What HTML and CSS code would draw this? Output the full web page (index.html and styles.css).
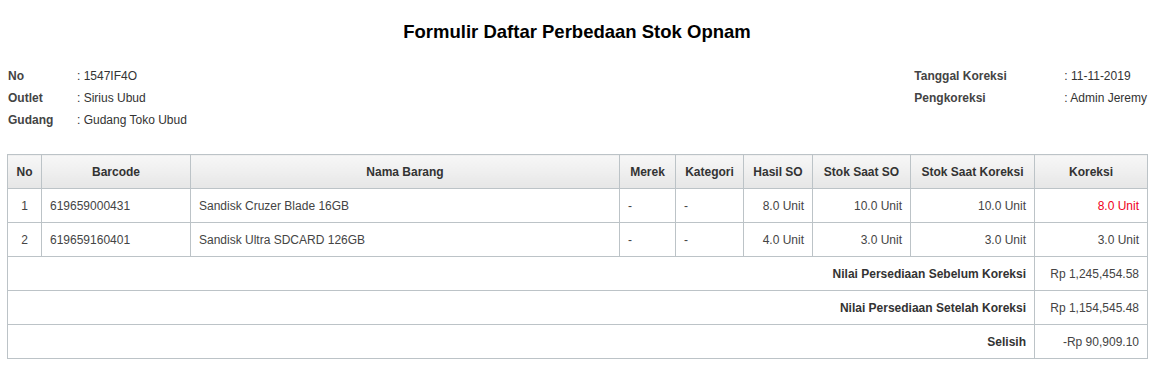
FILE: index.html
```html
<!DOCTYPE html>
<html>
<head>
<meta charset="utf-8">
<link rel="stylesheet" href="styles.css">
</head>
<body>
<div class="page">
  <h1 class="title">Formulir Daftar Perbedaan Stok Opnam</h1>
  <div class="info">
    <div class="info-block">
      <div class="info-row"><span class="lbl lbl-left">No</span><span class="val">: 1547IF4O</span></div>
      <div class="info-row"><span class="lbl lbl-left">Outlet</span><span class="val">: Sirius Ubud</span></div>
      <div class="info-row"><span class="lbl lbl-left">Gudang</span><span class="val">: Gudang Toko Ubud</span></div>
    </div>
    <div class="info-block">
      <div class="info-row"><span class="lbl lbl-right">Tanggal Koreksi</span><span class="val">: 11-11-2019</span></div>
      <div class="info-row"><span class="lbl lbl-right">Pengkoreksi</span><span class="val">: Admin Jeremy</span></div>
    </div>
  </div>
  <table class="grid">
    <colgroup>
      <col class="c-no"><col class="c-bar"><col class="c-name"><col class="c-merek"><col class="c-kat"><col class="c-hasil"><col class="c-stok"><col class="c-stokk"><col class="c-kor">
    </colgroup>
    <thead>
      <tr>
        <th>No</th><th>Barcode</th><th>Nama Barang</th><th>Merek</th><th>Kategori</th><th>Hasil SO</th><th>Stok Saat SO</th><th>Stok Saat Koreksi</th><th>Koreksi</th>
      </tr>
    </thead>
    <tbody>
      <tr>
        <td class="center">1</td><td>619659000431</td><td>Sandisk Cruzer Blade 16GB</td><td>-</td><td>-</td><td class="right">8.0 Unit</td><td class="right">10.0 Unit</td><td class="right">10.0 Unit</td><td class="right red">8.0 Unit</td>
      </tr>
      <tr>
        <td class="center">2</td><td>619659160401</td><td>Sandisk Ultra SDCARD 126GB</td><td>-</td><td>-</td><td class="right">4.0 Unit</td><td class="right">3.0 Unit</td><td class="right">3.0 Unit</td><td class="right">3.0 Unit</td>
      </tr>
      <tr>
        <td colspan="8" class="right bold">Nilai Persediaan Sebelum Koreksi</td><td class="right">Rp 1,245,454.58</td>
      </tr>
      <tr>
        <td colspan="8" class="right bold">Nilai Persediaan Setelah Koreksi</td><td class="right">Rp 1,154,545.48</td>
      </tr>
      <tr>
        <td colspan="8" class="right bold">Selisih</td><td class="right">-Rp 90,909.10</td>
      </tr>
    </tbody>
  </table>
</div>
</body>
</html>
```
FILE: styles.css
```css
* { box-sizing: border-box; }
body {
  margin: 0;
  background: #fff;
  font-family: "Liberation Sans", Arial, sans-serif;
  font-size: 12px;
  color: #333;
}
.page {
  width: 1140px;
  margin-left: 7px;
  padding-top: 21px;
}
.title {
  margin: 0;
  font-size: 18.5px;
  line-height: 22px;
  font-weight: bold;
  color: #000;
  text-align: center;
}
.info {
  display: flex;
  justify-content: space-between;
  margin-top: 22px;
  padding-left: 1px;
}
.info-row {
  display: flex;
  line-height: 22px;
  height: 22px;
}
.lbl {
  font-weight: bold;
  color: #444;
}
.lbl-left { width: 69px; }
.lbl-right { width: 150px; }
.val { color: #333; }
.grid {
  margin-top: 23px;
  width: 1140px;
  border-collapse: collapse;
  table-layout: fixed;
}
.c-no { width: 34px; }
.c-bar { width: 149px; }
.c-name { width: 429px; }
.c-merek { width: 56px; }
.c-kat { width: 68px; }
.c-hasil { width: 69px; }
.c-stok { width: 98px; }
.c-stokk { width: 124px; }
.c-kor { width: 113px; }
.grid th, .grid td {
  border: 1px solid #bcc3c7;
  height: 34px;
  padding: 0 8px;
  font-size: 12px;
  white-space: nowrap;
}
.grid th {
  font-weight: bold;
  color: #333;
  text-align: center;
  background: linear-gradient(to bottom, #f7f7f7 0%, #efefef 50%, #e6e6e6 100%);
}
.grid td { text-align: left; color: #444; }
.grid td.center { text-align: center; }
.grid td.right { text-align: right; }
.grid td.bold { font-weight: bold; color: #333; }
.grid td.red { color: #f00022; }
```
